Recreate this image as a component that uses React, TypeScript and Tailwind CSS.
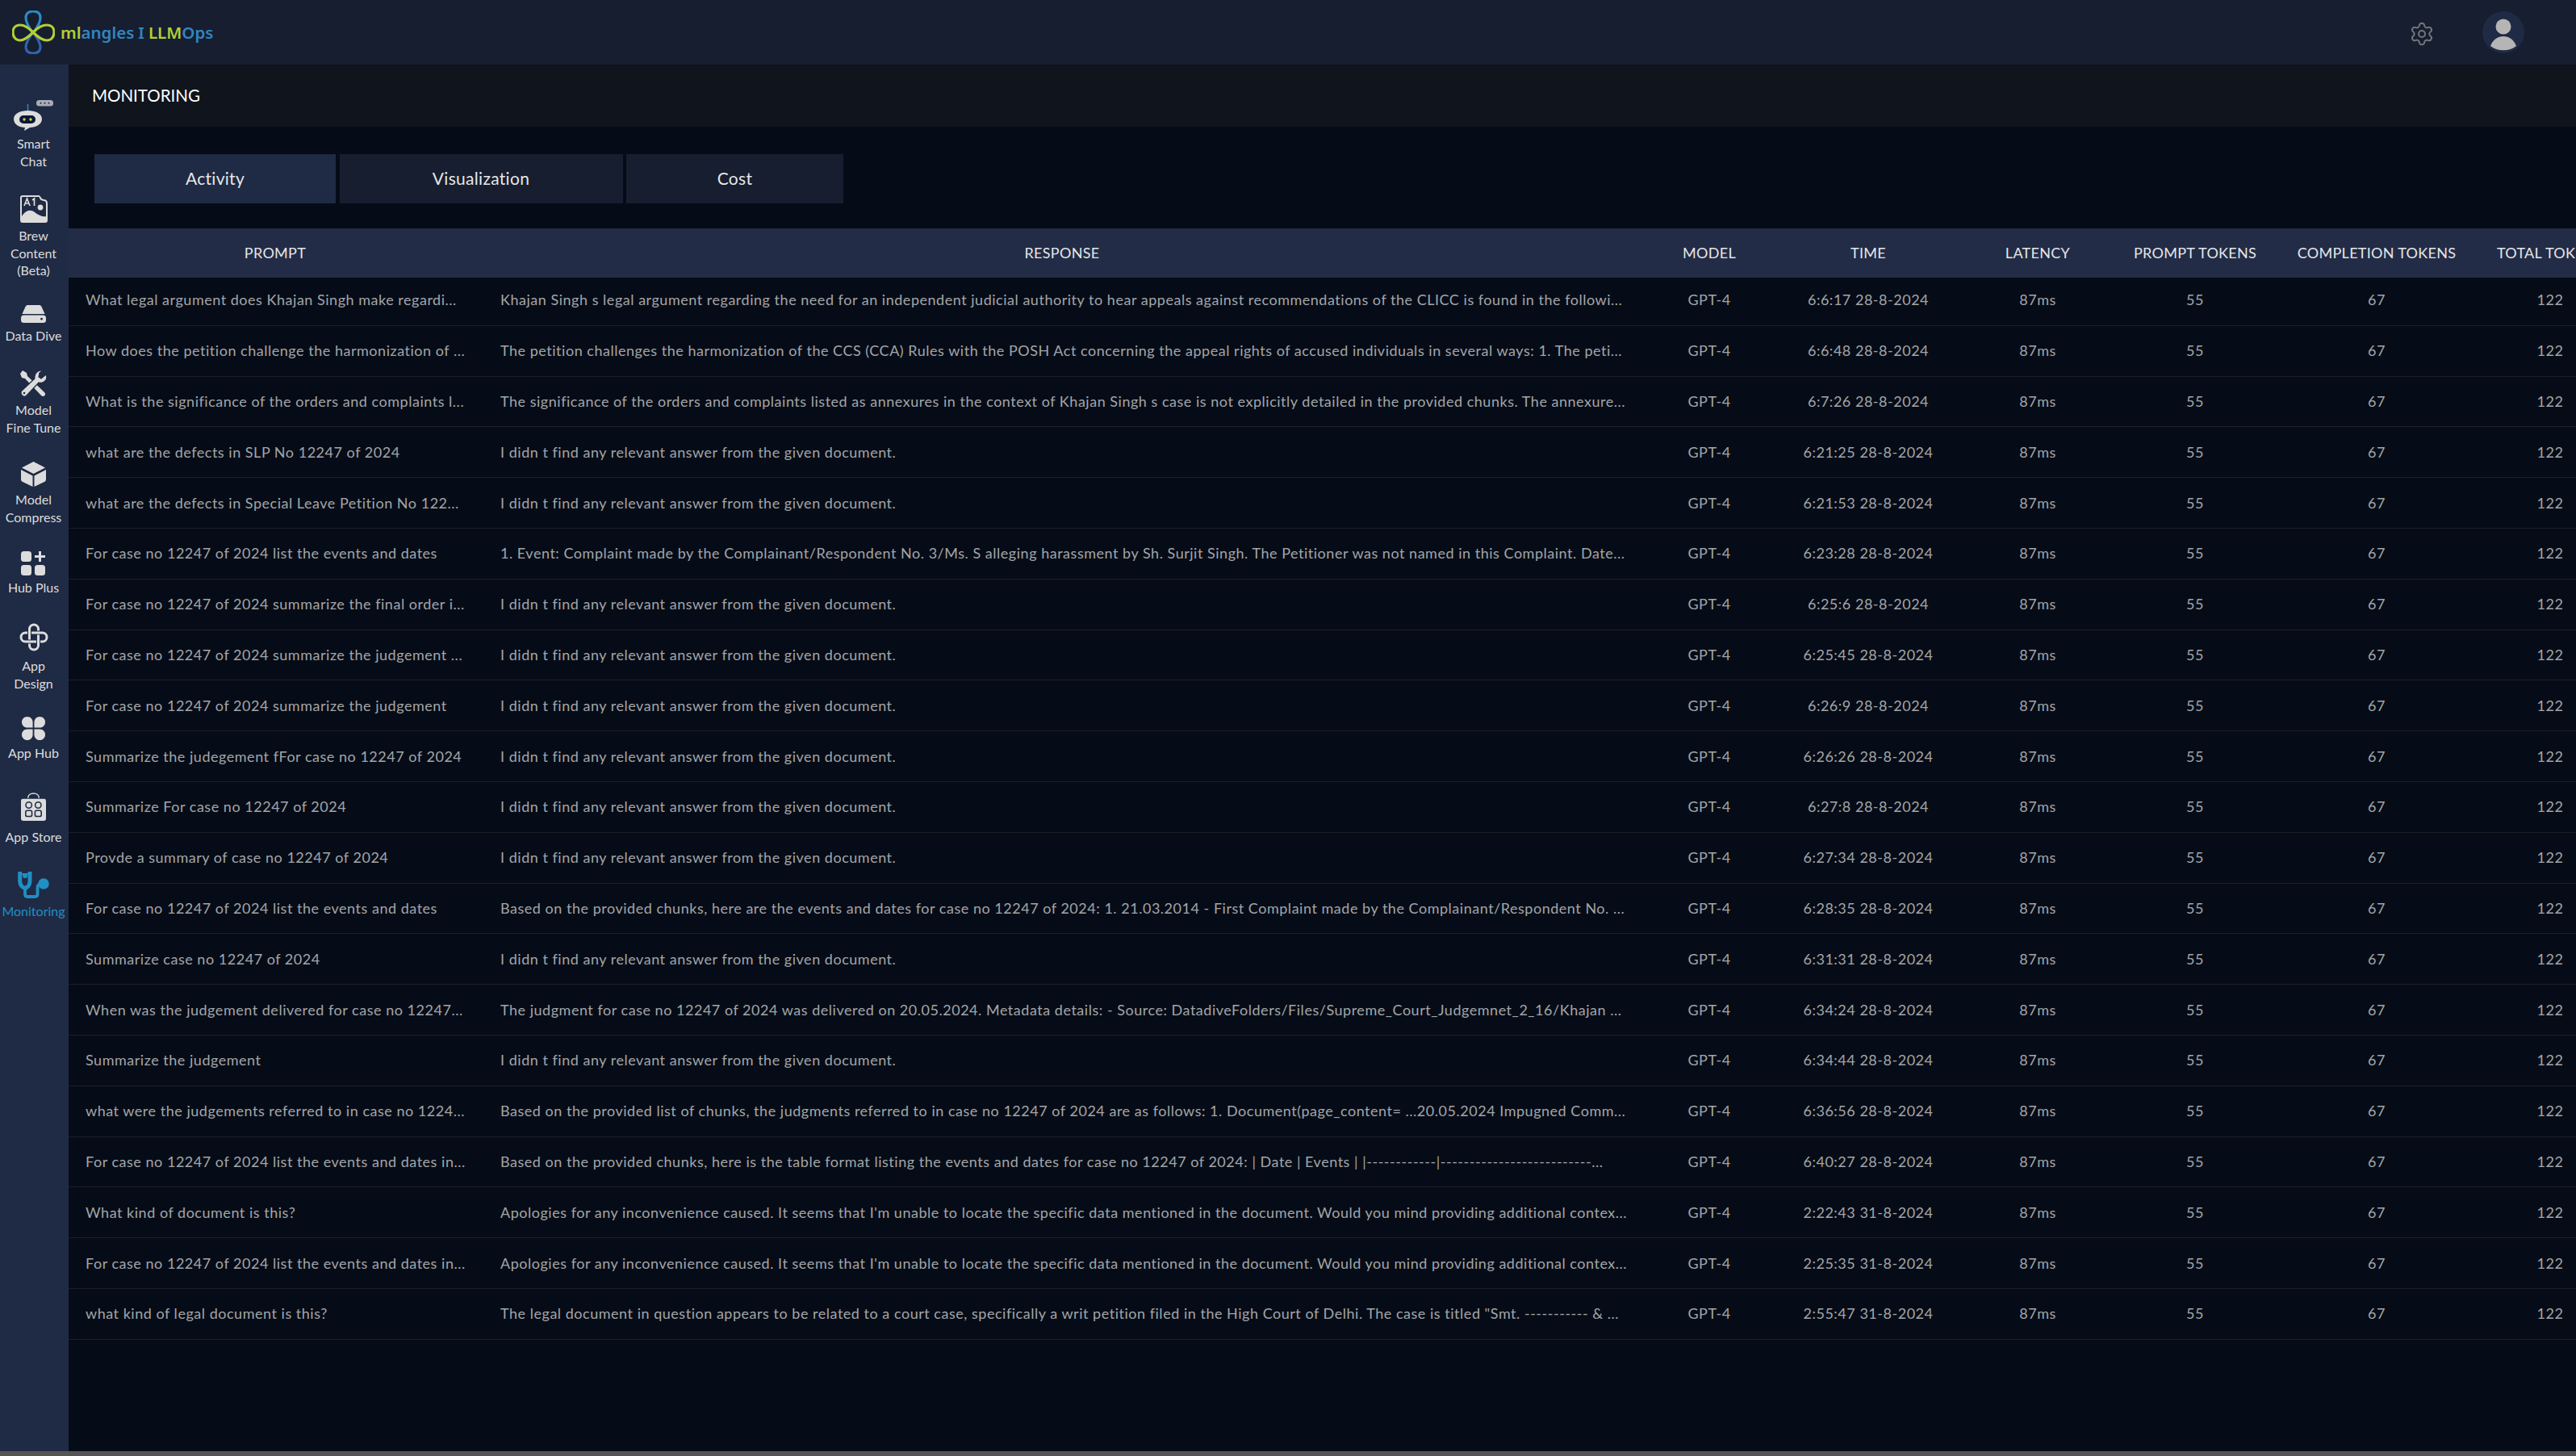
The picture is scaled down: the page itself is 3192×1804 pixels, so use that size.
import { Settings } from 'lucide-react';

const rows = [
  ["What legal argument does Khajan Singh make regardi...", "Khajan Singh s legal argument regarding the need for an independent judicial authority to hear appeals against recommendations of the CLICC is found in the followi...", "6:6:17 28-8-2024"],
  ["How does the petition challenge the harmonization of ...", "The petition challenges the harmonization of the CCS (CCA) Rules with the POSH Act concerning the appeal rights of accused individuals in several ways: 1. The peti...", "6:6:48 28-8-2024"],
  ["What is the significance of the orders and complaints l...", "The significance of the orders and complaints listed as annexures in the context of Khajan Singh s case is not explicitly detailed in the provided chunks. The annexure...", "6:7:26 28-8-2024"],
  ["what are the defects in SLP No 12247 of 2024", "I didn t find any relevant answer from the given document.", "6:21:25 28-8-2024"],
  ["what are the defects in Special Leave Petition No 122...", "I didn t find any relevant answer from the given document.", "6:21:53 28-8-2024"],
  ["For case no 12247 of 2024 list the events and dates", "1. Event: Complaint made by the Complainant/Respondent No. 3/Ms. S alleging harassment by Sh. Surjit Singh. The Petitioner was not named in this Complaint. Date...", "6:23:28 28-8-2024"],
  ["For case no 12247 of 2024 summarize the final order i...", "I didn t find any relevant answer from the given document.", "6:25:6 28-8-2024"],
  ["For case no 12247 of 2024 summarize the judgement ...", "I didn t find any relevant answer from the given document.", "6:25:45 28-8-2024"],
  ["For case no 12247 of 2024 summarize the judgement", "I didn t find any relevant answer from the given document.", "6:26:9 28-8-2024"],
  ["Summarize the judegement fFor case no 12247 of 2024", "I didn t find any relevant answer from the given document.", "6:26:26 28-8-2024"],
  ["Summarize For case no 12247 of 2024", "I didn t find any relevant answer from the given document.", "6:27:8 28-8-2024"],
  ["Provde a summary of case no 12247 of 2024", "I didn t find any relevant answer from the given document.", "6:27:34 28-8-2024"],
  ["For case no 12247 of 2024 list the events and dates", "Based on the provided chunks, here are the events and dates for case no 12247 of 2024: 1. 21.03.2014 - First Complaint made by the Complainant/Respondent No. ...", "6:28:35 28-8-2024"],
  ["Summarize case no 12247 of 2024", "I didn t find any relevant answer from the given document.", "6:31:31 28-8-2024"],
  ["When was the judgement delivered for case no 12247...", "The judgment for case no 12247 of 2024 was delivered on 20.05.2024. Metadata details: - Source: DatadiveFolders/Files/Supreme_Court_Judgemnet_2_16/Khajan ...", "6:34:24 28-8-2024"],
  ["Summarize the judgement", "I didn t find any relevant answer from the given document.", "6:34:44 28-8-2024"],
  ["what were the judgements referred to in case no 1224...", "Based on the provided list of chunks, the judgments referred to in case no 12247 of 2024 are as follows: 1. Document(page_content= ...20.05.2024 Impugned Comm...", "6:36:56 28-8-2024"],
  ["For case no 12247 of 2024 list the events and dates in...", "Based on the provided chunks, here is the table format listing the events and dates for case no 12247 of 2024: | Date | Events | |------------|--------------------------...", "6:40:27 28-8-2024"],
  ["What kind of document is this?", "Apologies for any inconvenience caused. It seems that I'm unable to locate the specific data mentioned in the document. Would you mind providing additional contex...", "2:22:43 31-8-2024"],
  ["For case no 12247 of 2024 list the events and dates in...", "Apologies for any inconvenience caused. It seems that I'm unable to locate the specific data mentioned in the document. Would you mind providing additional contex...", "2:25:35 31-8-2024"],
  ["what kind of legal document is this?", "The legal document in question appears to be related to a court case, specifically a writ petition filed in the High Court of Delhi. The case is titled \"Smt. ----------- & ...", "2:55:47 31-8-2024"],
];

function Logo() {
  return (
    <div className="flex items-center">
      <svg width="53" height="54" viewBox="0 0 53 54" fill="none" className="shrink-0">
        <path d="M26 28 C20 20 17 14 17 9 C17 3 21 1 26 1 C31 1 35 3 35 9 C35 14 32 20 26 28" stroke="#2b8ac6" strokeWidth="3.2" />
        <path d="M26 27 C20 35 17 40 17 45 C17 51 21 53 26 53 C31 53 35 51 35 45 C35 40 32 35 26 27" stroke="#2f62b0" strokeWidth="3.2" />
        <path d="M26 27 C20 21 15 18 10 18 C4 18 1 22 1 27 C1 32 4 37 10 37 C15 37 20 33 26 27" stroke="#b2cf35" strokeWidth="3.2" />
        <path d="M26 27 C32 21 37 18 43 18 C49 18 52 22 52 27 C52 32 49 37 43 37 C37 37 32 33 26 27" stroke="#b2cf35" strokeWidth="3.2" />
      </svg>
      <span className="ml-[7px] mt-[1px] text-[20.5px] font-semibold leading-none whitespace-nowrap font-['Noto_Sans',sans-serif]">
        <span className="text-[#b2cf35]">ml</span>
        <span className="text-[#2f86c1]">angles</span>
        <span className="text-[#2f86c1] mx-[5px]">I</span>
        <span className="text-[#b2cf35]">LLM</span>
        <span className="text-[#2f86c1]">Ops</span>
      </span>
    </div>
  );
}

function NavIcon({ name }: { name: string }) {
  const c = "#dcdcdc";
  const bg = "#1f2a44";
  if (name === "chat") return (
    <svg width="49" height="39" viewBox="0 0 49 39">
      <rect x="28" y="1" width="21" height="7.5" rx="3.5" fill="#a9adb5" />
      <circle cx="33.5" cy="4.8" r="1" fill={bg} /><circle cx="38.5" cy="4.8" r="1" fill={bg} /><circle cx="43.5" cy="4.8" r="1" fill={bg} />
      <path d="M17.5 6 V14" stroke="#2f86c1" strokeWidth="1.5" />
      <path d="M17.5 14 C27 14 35 18 35 24.5 C35 31 27 35 20 35 L13 39 L14 35 C7 35 0 31 0 24.5 C0 18 8 14 17.5 14 Z" fill={c} />
      <rect x="7" y="20" width="20" height="10" rx="5" fill="#0d1638" />
      <circle cx="13" cy="25" r="1.7" fill="#c9d34a" /><circle cx="21" cy="25" r="1.7" fill="#c9d34a" />
    </svg>
  );
  if (name === "brew") return (
    <svg width="34" height="34" viewBox="0 0 34 34">
      <path d="M3 1 H23 C24 1 25 3 26 5 L29 6 C32 6 33 7 33 10 V31 C33 32 32 33 31 33 H3 C2 33 1 32 1 31 V3 C1 2 2 1 3 1 Z" fill="none" stroke={c} strokeWidth="2" />
      <path d="M2 26 C7 18 13 17 18 21 C23 25 28 27 33 26 V31 C33 32 32 33 31 33 H3 C2 33 2 32 2 31 Z" fill={c} />
      <circle cx="25" cy="15" r="3.4" fill={c} />
      <path d="M5 13 L8.5 4 L12 13 M6.2 10 H10.8 M15 6 L17.5 4 V13" stroke={c} strokeWidth="1.7" fill="none" />
    </svg>
  );
  if (name === "dive") return (
    <svg width="31" height="22" viewBox="0 0 31 22">
      <path d="M8 0 H23 C24 0 25 1 25.5 2 L29.5 11 H1.5 L5.5 2 C6 1 7 0 8 0 Z" fill={c} />
      <rect x="0" y="12.5" width="31" height="9.5" rx="3.5" fill={c} />
      <circle cx="25.5" cy="17.2" r="1.4" fill={bg} />
    </svg>
  );
  if (name === "tune") return (
    <svg width="33" height="33" viewBox="0 0 33 33">
      <path d="M3 0 L8 3 L9 7 L30 27 C33 30 29 34 26 31 L6 10 L2 9 L0 4 Z" fill={c} />
      <path d="M32 5 L26 10 L23 8 L24 3 L28 0 C22 -1 17 4 18 10 L2 25 C-1 29 4 35 8 31 L23 15 C29 17 35 11 32 5 Z" fill={c} stroke={bg} strokeWidth="1.2" />
      <circle cx="5" cy="28" r="1.3" fill={bg} />
    </svg>
  );
  if (name === "box") return (
    <svg width="31" height="31" viewBox="0 0 31 31">
      <path d="M15.5 0 L30 7.5 L15.5 15 L1 7.5 Z" fill={c} />
      <path d="M0 10 L14.5 17.5 V31 L2 25 C1 24.5 0 23.5 0 22 Z" fill={c} />
      <path d="M31 10 L16.5 17.5 V31 L29 25 C30 24.5 31 23.5 31 22 Z" fill={c} />
    </svg>
  );
  if (name === "plus") return (
    <svg width="30" height="30" viewBox="0 0 30 30">
      <rect x="0" y="0" width="13" height="13" rx="3.5" fill={c} />
      <rect x="0" y="17" width="13" height="13" rx="3.5" fill={c} />
      <rect x="17" y="17" width="13" height="13" rx="3.5" fill={c} />
      <path d="M23.5 0 V13 M17 6.5 H30" stroke={c} strokeWidth="3" />
    </svg>
  );
  if (name === "design") return (
    <svg width="36" height="35" viewBox="0 0 36 35" fill="none">
      <rect x="12.5" y="2" width="11" height="31" rx="5.5" stroke={c} strokeWidth="3" />
      <rect x="2" y="12" width="32" height="11" rx="5.5" stroke={bg} strokeWidth="5" />
      <rect x="2" y="12" width="32" height="11" rx="5.5" stroke={c} strokeWidth="3" />
      <path d="M12.5 8 V16" stroke={bg} strokeWidth="5" />
      <path d="M12.5 7 V17" stroke={c} strokeWidth="3" />
      <path d="M23.5 19 V27" stroke={bg} strokeWidth="5" />
      <path d="M23.5 18 V28" stroke={c} strokeWidth="3" />
    </svg>
  );
  if (name === "hub") return (
    <svg width="29" height="29" viewBox="0 0 30 30" fill={c}>
      <path d="M7 0 C11 0 14 3 14 7 V14 H7 C3 14 0 11 0 7 C0 3 3 0 7 0 Z" />
      <path d="M23 0 C27 0 30 3 30 7 C30 11 27 14 23 14 H16 V7 C16 3 19 0 23 0 Z" />
      <path d="M7 30 C3 30 0 27 0 23 C0 19 3 16 7 16 H14 V23 C14 27 11 30 7 30 Z" />
      <path d="M23 30 C19 30 16 27 16 23 V16 H23 C27 16 30 19 30 23 C30 27 27 30 23 30 Z" />
    </svg>
  );
  if (name === "store") return (
    <svg width="31" height="38" viewBox="0 0 32 39">
      <path d="M9 10 C9 2 23 2 23 10" fill="none" stroke={c} strokeWidth="1.5" />
      <rect x="0" y="11" width="32" height="28" rx="2.5" fill={c} />
      <circle cx="10" cy="19" r="3.8" fill="none" stroke={bg} strokeWidth="1.6" />
      <circle cx="22" cy="19" r="3.8" fill="none" stroke={bg} strokeWidth="1.6" />
      <rect x="6" y="26" width="8" height="7.5" rx="2" fill="none" stroke={bg} strokeWidth="1.6" />
      <rect x="18" y="26" width="8" height="7.5" rx="2" fill="none" stroke={bg} strokeWidth="1.6" />
    </svg>
  );
  return (
    <svg width="39" height="33" viewBox="0 0 39 33" fill="none">
      <path d="M2.7 0 V12 C2.7 17 6 20 9 20 C12 20 15 17 15 12 V0" stroke="#1f8fc4" strokeWidth="5" />
      <path d="M5 2 H13 L11 8 H7 Z" fill="#1f8fc4" />
      <path d="M9 20 V28 C9 30 10 31 12 31 H21 C23 31 24.5 30 24.5 28 V20 C24.5 17 26 15 30 15" stroke="#1f8fc4" strokeWidth="3.8" />
      <circle cx="32" cy="15" r="6.8" fill="#1f8fc4" />
    </svg>
  );
}

function NavItem({ icon, label, active, className, gap }: { icon: string; label: string[]; active?: boolean; className: string; gap: string }) {
  return (
    <div className={`flex flex-col items-center ${className}`}>
      <NavIcon name={icon} />
      <div className={`text-[16px] leading-[21.5px] text-center whitespace-nowrap ${gap} ${active ? 'text-[#1f8fc4]' : 'text-[#dcdcdc]'}`}>
        {label.map((l) => <div key={l}>{l}</div>)}
      </div>
    </div>
  );
}

export default function App() {
  const grid = "grid grid-cols-[512px_1438px_166px_228px_192px_198px_252px_178px] w-[3164px]";
  return (
    <div className="w-[3192px] h-[1804px] flex flex-col overflow-hidden bg-[#060c17] font-['Lato','Noto_Sans',sans-serif]">
      <header className="h-[80px] shrink-0 bg-[#161e30] flex items-center justify-between pl-[15px] pr-[64px]">
        <Logo />
        <div className="flex items-center gap-[59px]">
          <Settings size={32} strokeWidth={1.5} className="text-[#72767b] mt-[4px]" />
          <div className="w-[52px] h-[52px] rounded-full bg-[#1f2a44] overflow-hidden">
            <svg width="52" height="52" viewBox="0 0 52 52" fill="#b5b5b5">
              <circle cx="26" cy="19" r="9.5" />
              <path d="M10 43 C13 35 19 31 26 31 C33 31 39 35 42 43 C34 50 18 50 10 43 Z" />
            </svg>
          </div>
        </div>
      </header>

      <div className="flex-1 min-h-0 flex">
        <aside className="w-[85px] shrink-0 bg-[#1f2a44] flex flex-col items-center pt-[43px] pr-[2px]">
          <NavItem icon="chat" label={["Smart", "Chat"]} className="h-[119px]" gap="mt-[5px]" />
          <NavItem icon="brew" label={["Brew", "Content", "(Beta)"]} className="h-[136px]" gap="mt-[5px]" />
          <NavItem icon="dive" label={["Data Dive"]} className="h-[81px]" gap="mt-[5px]" />
          <NavItem icon="tune" label={["Model", "Fine Tune"]} className="h-[113px]" gap="mt-[5px]" />
          <NavItem icon="box" label={["Model", "Compress"]} className="h-[111px]" gap="mt-[5px]" />
          <NavItem icon="plus" label={["Hub Plus"]} className="h-[89px]" gap="mt-[4px]" />
          <NavItem icon="design" label={["App", "Design"]} className="h-[116px]" gap="mt-[7px]" />
          <NavItem icon="hub" label={["App Hub"]} className="h-[91px]" gap="mt-[5px]" />
          <NavItem icon="store" label={["App Store"]} className="h-[101px]" gap="mt-[9px]" />
          <NavItem icon="monitor" label={["Monitoring"]} active className="h-[60px]" gap="mt-[5px]" />
        </aside>

        <main className="flex-1 min-w-0 overflow-hidden">
          <div className="h-[77px] bg-[#10141c] flex items-center pl-[29px] text-[20.5px] text-white">MONITORING</div>
          <div className="h-[126px] flex items-start pt-[34px] pl-[32px] gap-[4.5px] text-[21px] tracking-[0.3px] text-[#e6e6e6]">
            <button className="w-[299px] h-[61px] pb-[2px] bg-[#1f2a44]">Activity</button>
            <button className="w-[351px] h-[61px] pb-[2px] bg-[#161e30]">Visualization</button>
            <button className="w-[269px] h-[61px] pb-[2px] bg-[#161e30]">Cost</button>
          </div>
          <div className={`${grid} relative z-10 -mb-[3px] h-[61px] items-center bg-[#222c47] text-[18px] tracking-[0.3px] text-[#e6e6e6] text-center whitespace-nowrap`}>
            {["PROMPT", "RESPONSE", "MODEL", "TIME", "LATENCY", "PROMPT TOKENS", "COMPLETION TOKENS", "TOTAL TOKENS"].map((h) => (
              <div key={h}>{h}</div>
            ))}
          </div>
          {rows.map((r) => (
            <div key={r[2] + r[0]} className={`${grid} h-[62.8px] items-center border-b border-b-[#1b1e25] text-[18px] tracking-[0.52px] text-[#a3a5a8] whitespace-nowrap`}>
              <div className="pl-[21px]">{r[0]}</div>
              <div className="pl-[23px]">{r[1]}</div>
              <div className="text-center">GPT-4</div>
              <div className="text-center">{r[2]}</div>
              <div className="text-center">87ms</div>
              <div className="text-center">55</div>
              <div className="text-center">67</div>
              <div className="text-center">122</div>
            </div>
          ))}
        </main>
      </div>
      <div className="h-[6px] shrink-0 bg-[#555555]" />
    </div>
  );
}
